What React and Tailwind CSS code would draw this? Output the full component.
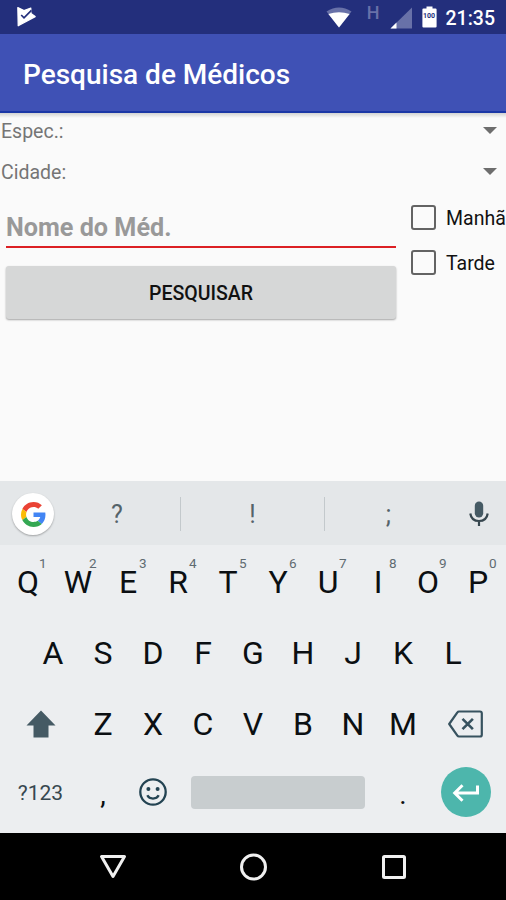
import React, { useState } from "react";

const topRow = ["Q", "W", "E", "R", "T", "Y", "U", "I", "O", "P"];
const middleRow = ["A", "S", "D", "F", "G", "H", "J", "K", "L"];
const bottomRow = ["Z", "X", "C", "V", "B", "N", "M"];

const Key = ({ label, hint }) => (
  <button
    type="button"
    className="relative flex h-full w-[50px] items-center justify-center text-[32px] leading-none text-[#0b0f12]"
  >
    {label}
    {hint && (
      <span className="absolute top-[9px] left-[36px] text-[13.5px] leading-none text-[#5f6b71]">
        {hint}
      </span>
    )}
  </button>
);

const PunctuationKey = ({ label }) => (
  <button
    type="button"
    className="w-[50px] pt-[5px] text-center text-[28px] leading-none text-[#0b0f12]"
  >
    {label}
  </button>
);

const StatusBar = () => (
  <div className="flex h-[34px] shrink-0 items-center bg-[#232f7c] text-white">
    <svg className="ml-[15px] h-[22px] w-[22px]" viewBox="0 0 22 22">
      <path
        d="M2.8 1.6 L9 4.6 L15.8 2 L16 7.6 L20.2 10.6 L3.2 19.8 Z"
        fill="#fff"
        stroke="#fff"
        strokeWidth="1.2"
        strokeLinejoin="round"
      />
      <path
        d="M6.2 9 L9 11.8 L16.4 4.4"
        fill="none"
        stroke="#232f7c"
        strokeWidth="1.7"
      />
    </svg>
    <div className="flex-1" />
    <svg className="h-[21px] w-[26px]" viewBox="0 0 26 21">
      <path d="M0.5 4.5 Q13 -3.5 25.5 4.5 L13 20.5 Z" fill="#6871a8" />
      <path d="M2.4 7 Q13 3.6 23.6 7 L13 20.5 Z" fill="#fff" />
    </svg>
    <span className="mb-[8px] ml-[15px] w-[13px] text-center text-[18px] leading-none font-medium text-[#6871a8]">
      H
    </span>
    <svg className="mt-px ml-[10px] h-[22px] w-[22px]" viewBox="0 0 22 22">
      <path d="M0.5 21.5 L22 0.5 V21.5 Z" fill="#6871a8" />
      <path d="M0.5 21.5 L6.5 15.5 V21.5 Z" fill="#fff" />
    </svg>
    <div className="relative ml-[10px] h-[22px] w-[15px]">
      <svg className="h-full w-full" viewBox="0 0 15 22">
        <path
          d="M4.5 0.5 H10.5 V2.5 H13.5 Q14.6 2.5 14.6 3.6 V20.4 Q14.6 21.5 13.5 21.5 H1.5 Q0.4 21.5 0.4 20.4 V3.6 Q0.4 2.5 1.5 2.5 H4.5 Z"
          fill="#fff"
        />
      </svg>
      <span className="absolute inset-x-0 top-[7px] text-center text-[7px] leading-none font-bold text-[#232f7c]">
        100
      </span>
    </div>
    <span className="mt-[3px] mr-[11px] ml-[9px] text-[19.5px] leading-none font-medium">
      21:35
    </span>
  </div>
);

const Spinner = ({ label }) => (
  <div className="flex h-[41px] items-center justify-between pr-[9px] pl-px">
    <span className="text-[19.5px] text-[#757575]">{label}</span>
    <svg className="mb-[3px] h-[7px] w-[14px]" viewBox="0 0 14 7">
      <path d="M0 0 H14 L7 7 Z" fill="#6d6d6d" />
    </svg>
  </div>
);

const CheckBox = ({ label }) => {
  const [checked, setChecked] = useState(false);

  return (
    <label className="flex h-[45px] items-center">
      <input
        type="checkbox"
        checked={checked}
        onChange={(e) => setChecked(e.target.checked)}
        className="h-[25px] w-[25px] shrink-0 appearance-none rounded-[3px] border-2 border-[#636363] checked:bg-[#ff4081]"
      />
      <span className="mt-[2px] ml-[10px] text-[19.5px] whitespace-nowrap text-[#111]">
        {label}
      </span>
    </label>
  );
};

const SearchForm = () => {
  const [name, setName] = useState("");

  return (
    <main className="flex-1 overflow-hidden">
      <div className="h-[5px] bg-gradient-to-b from-[#d2d3d2] to-[#fafafa]" />
      <div className="-mt-[7px]">
        <Spinner label="Espec.:" />
        <Spinner label="Cidade:" />
      </div>
      <div className="flex">
        <div className="ml-[6px] w-[390px] shrink-0 pt-[17px]">
          <input
            type="text"
            value={name}
            onChange={(e) => setName(e.target.value)}
            placeholder="Nome do Méd."
            className="block h-[38px] w-full border-b-2 border-[#dc2024] pb-0.5 text-[25.2px] font-bold text-[#333] outline-none placeholder:text-[#999]"
          />
          <button
            type="button"
            className="mt-[18px] h-[53px] w-full rounded-[3px] bg-[#d6d7d7] pt-[2px] text-[19.5px] font-medium text-[#111] shadow-[0_1px_2px_rgba(0,0,0,0.35)]"
          >
            PESQUISAR
          </button>
        </div>
        <div className="ml-[15px] min-w-0 flex-1 overflow-hidden pt-[2px]">
          <CheckBox label="Manhã" />
          <CheckBox label="Tarde" />
        </div>
      </div>
    </main>
  );
};

const GoogleLogo = () => (
  <svg className="h-[25px] w-[25px]" viewBox="0 0 48 48">
    <path
      fill="#EA4335"
      d="M24 9.5c3.54 0 6.71 1.22 9.21 3.6l6.85-6.85C35.9 2.38 30.47 0 24 0 14.62 0 6.51 5.38 2.56 13.22l7.98 6.19C12.43 13.72 17.74 9.5 24 9.5z"
    />
    <path
      fill="#4285F4"
      d="M46.98 24.55c0-1.57-.15-3.09-.38-4.55H24v9.02h12.94c-.58 2.96-2.26 5.48-4.78 7.18l7.73 6c4.51-4.18 7.09-10.36 7.09-17.65z"
    />
    <path
      fill="#FBBC05"
      d="M10.53 28.59c-.48-1.45-.76-2.99-.76-4.59s.27-3.14.76-4.59l-7.98-6.19C.92 16.46 0 20.12 0 24c0 3.88.92 7.54 2.56 10.78l7.97-6.19z"
    />
    <path
      fill="#34A853"
      d="M24 48c6.48 0 11.93-2.13 15.89-5.81l-7.73-6c-2.15 1.45-4.92 2.3-8.16 2.3-6.26 0-11.57-4.22-13.47-9.91l-7.98 6.19C6.51 42.62 14.62 48 24 48z"
    />
  </svg>
);

const Suggestions = () => (
  <div className="flex h-[64px] items-center bg-[#e4e7e9] pt-[2px] text-[25px] text-[#54636a]">
    <div className="ml-3 flex h-[42px] w-[42px] shrink-0 items-center justify-center rounded-full bg-white shadow-[0_1px_2px_rgba(0,0,0,0.3)]">
      <GoogleLogo />
    </div>
    <div className="w-[126px] pt-[2px] text-center">?</div>
    <div className="h-[34px] w-px bg-[#c3c9cc]" />
    <div className="w-[143px] pt-[2px] text-center">!</div>
    <div className="h-[34px] w-px bg-[#c3c9cc]" />
    <div className="w-[127px] pt-[2px] text-center">;</div>
    <svg className="ml-[17px] h-[26px] w-[20px]" viewBox="0 0 20 26">
      <rect x="5.8" y="0.5" width="8.4" height="16" rx="4.2" fill="#455a64" />
      <path
        d="M1.3 12.5 C2 17.5 5.5 20 10 20 S18 17.5 18.7 12.5 M10 20 V25"
        fill="none"
        stroke="#37474f"
        strokeWidth="2.2"
      />
    </svg>
  </div>
);

const Keyboard = () => (
  <div className="flex h-[352px] shrink-0 flex-col bg-[#eceef0]">
    <Suggestions />
    <div className="flex h-[71px] justify-center pt-[3px]">
      {topRow.map((letter, index) => (
        <Key key={letter} label={letter} hint={String((index + 1) % 10)} />
      ))}
    </div>
    <div className="flex h-[71px] justify-center pt-[3px]">
      {middleRow.map((letter) => (
        <Key key={letter} label={letter} />
      ))}
    </div>
    <div className="flex h-[71px] justify-center pt-[3px]">
      <button type="button" className="flex w-[75px] items-center justify-center">
        <svg className="h-[28px] w-[30px]" viewBox="0 0 30 28">
          <path d="M15 0.5 L29.5 15.5 H22.5 V27.5 H7.5 V15.5 H0.5 Z" fill="#455a64" />
        </svg>
      </button>
      {bottomRow.map((letter) => (
        <Key key={letter} label={letter} />
      ))}
      <button type="button" className="flex w-[75px] items-center justify-center">
        <svg
          className="h-[28px] w-[35px]"
          viewBox="0 0 35 28"
          fill="none"
          stroke="#37525f"
          strokeWidth="2.2"
        >
          <path
            d="M11 1.5 H32 Q33.8 1.5 33.8 3.3 V24.7 Q33.8 26.5 32 26.5 H11 Q10 26.5 9.4 25.6 L1.2 14 L9.4 2.4 Q10 1.5 11 1.5 Z"
            strokeLinejoin="round"
          />
          <path d="M14.5 8.8 L24.9 19.2 M24.9 8.8 L14.5 19.2" strokeWidth="2.6" />
        </svg>
      </button>
    </div>
    <div className="flex h-[64px] items-center justify-center pt-[4px]">
      <button type="button" className="w-[75px] pt-[4px] text-[21px] text-[#37474f]">
        ?123
      </button>
      <PunctuationKey label="," />
      <button type="button" className="flex w-[50px] justify-center">
        <svg
          className="h-[28px] w-[28px]"
          viewBox="0 0 28 28"
          fill="none"
          stroke="#234352"
          strokeWidth="2.3"
        >
          <circle cx="14" cy="14" r="12.7" />
          <path d="M8.3 17.3 C10.5 21.6 17.5 21.6 19.7 17.3" />
          <circle cx="9.4" cy="11" r="2" fill="#234352" stroke="none" />
          <circle cx="18.6" cy="11" r="2" fill="#234352" stroke="none" />
        </svg>
      </button>
      <div className="w-[200px] px-[13px]">
        <div className="h-[33px] rounded-[4px] bg-[#c8cdcf]" />
      </div>
      <PunctuationKey label="." />
      <button type="button" className="flex w-[75px] justify-center">
        <span className="flex h-[50px] w-[50px] items-center justify-center rounded-full bg-[#4db6ac]">
          <svg
            className="mt-[2px] h-[18px] w-[28px]"
            viewBox="0 0 28 18"
            fill="none"
            stroke="#fff"
            strokeWidth="3"
          >
            <path d="M25.5 1.5 V9 H3 M10.5 1.2 L2.7 9 L10.5 16.8" />
          </svg>
        </span>
      </button>
    </div>
  </div>
);

const NavBar = () => (
  <div className="flex h-[67px] shrink-0 items-center justify-center bg-black">
    <svg className="h-[28px] w-[308px]" viewBox="0 0 308 28" fill="none" stroke="#f0f0f0" strokeWidth="3">
      <path d="M2.5 3.5 H25.5 L14 23.5 Z" strokeLinejoin="round" />
      <circle cx="154.5" cy="14" r="12" />
      <rect x="284.5" y="3.5" width="21" height="21" rx="1" />
    </svg>
  </div>
);

export default function App() {
  return (
    <div className="flex h-[900px] w-[506px] flex-col overflow-hidden bg-[#fafafa] font-[Roboto,sans-serif]">
      <StatusBar />
      <header className="flex h-[79px] shrink-0 items-center border-b-2 border-[#1b37a6] bg-[#3f51b5] pt-[4px] pl-[23px]">
        <h1 className="text-[28px] font-medium text-white">
          Pesquisa de Médicos
        </h1>
      </header>
      <SearchForm />
      <Keyboard />
      <NavBar />
    </div>
  );
}
